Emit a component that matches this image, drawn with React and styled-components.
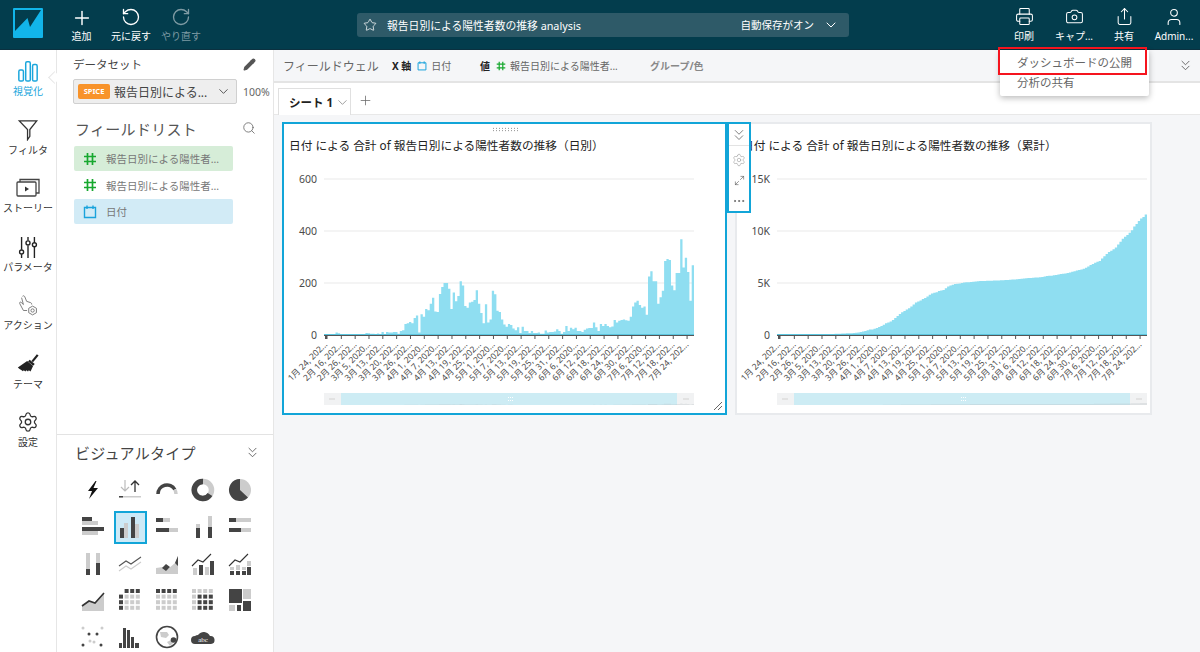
import styled, { createGlobalStyle } from "styled-components"
import { Plus, RotateCcw, RotateCw, Star, ChevronDown, ChevronsDown, Printer, Camera, Share, User, Pencil, Search, Maximize2, Ellipsis, Settings } from "lucide-react"

const FONT = `"Noto Sans", "Noto Sans CJK JP", sans-serif`

const daily = [
  3, 3, 3, 3, 3, 10, 7, 3, 3, 3, 3, 3, 3, 3, 3, 3, 3, 3, 8, 7, 5, 5, 4, 6, 4, 12, 3, 12, 10, 10, 12, 11, 5, 15, 18,
  42, 45, 50, 45, 65, 75, 10, 80, 70, 100, 95, 120, 143, 90, 88, 158, 185, 200, 200, 178, 100, 163, 130, 150, 207, 190,
  112, 105, 125, 128, 135, 172, 120, 85, 45, 118, 48, 60, 170, 157, 93, 88, 60, 40, 32, 42, 38, 25, 18, 30, 8, 32, 15, 15,
  8, 15, 8, 8, 10, 5, 5, 17, 10, 12, 12, 14, 22, 15, 5, 12, 35, 15, 28, 22, 28, 15, 15, 12, 20, 25, 27, 27, 48, 30, 15,
  42, 35, 42, 35, 30, 33, 58, 48, 55, 58, 60, 57, 55, 70, 110, 125, 132, 115, 105, 110, 78, 225, 245, 207, 207, 120, 145,
  170, 285, 292, 288, 190, 172, 238, 238, 368, 260, 297, 242, 132, 268,
]

const total = daily.reduce((a, b) => a + b, 0)
let running = 0
const cumulative = daily.map((v) => {
  running += v
  return (running / total) * 11600
})

const dateLabels = [
  "1月 24, 202...", "2月 16, 202...", "2月 26, 202...", "3月 5, 2020...", "3月 13, 202...", "3月 20, 202...", "3月 26, 202...",
  "4月 1, 2020...", "4月 7, 2020...", "4月 13, 202...", "4月 19, 202...", "4月 25, 202...", "5月 1, 2020...", "5月 7, 2020...",
  "5月 13, 202...", "5月 19, 202...", "5月 25, 202...", "5月 31, 202...", "6月 6, 2020...", "6月 12, 202...", "6月 18, 202...",
  "6月 24, 202...", "6月 30, 202...", "7月 6, 2020...", "7月 12, 202...", "7月 18, 202...", "7月 24, 202...",
]

const PLOT_LEFT = 40
const PLOT_WIDTH = 370
const BASE_Y = 170
const PLOT_HEIGHT = 156

const AxisText = styled.text`
  fill: #4a4a4a;
  font-family: ${FONT};
`

const CloudText = styled.text`
  fill: #fff;
  font-size: 7px;
  font-family: "Liberation Serif", serif;
`

function stepPath(values, max, left, base, width, height) {
  const step = width / values.length
  let d = `M${left} ${base}`
  values.forEach((v, i) => {
    const y = (base - (v / max) * height).toFixed(1)
    d += `L${(left + i * step).toFixed(1)} ${y}L${(left + (i + 1) * step).toFixed(1)} ${y}`
  })
  return d + `L${left + width} ${base}Z`
}

function BarChart({ values, max, ticks, width }) {
  return (
    <svg width={width} height="248" viewBox={`0 0 ${width} 248`}>
      {ticks.map((t, i) => {
        const y = BASE_Y - (PLOT_HEIGHT * i) / (ticks.length - 1)
        return (
          <g key={t}>
            {i > 0 && <line x1={PLOT_LEFT} x2={PLOT_LEFT + PLOT_WIDTH} y1={y} y2={y} stroke="#e9e9e9" />}
            <AxisText x="33" y={y + 3.5} textAnchor="end" fontSize="10.5">{t}</AxisText>
          </g>
        )
      })}
      <path d={stepPath(values, max, PLOT_LEFT, BASE_Y, PLOT_WIDTH, PLOT_HEIGHT)} fill="#8fdef1" />
      <line x1={PLOT_LEFT} x2={PLOT_LEFT + PLOT_WIDTH} y1={BASE_Y + 0.5} y2={BASE_Y + 0.5} stroke="#555" />
      <line x1={PLOT_LEFT} x2={PLOT_LEFT + PLOT_WIDTH} y1={BASE_Y - 0.5} y2={BASE_Y - 0.5} stroke="#5cc6df" />
      <rect x={PLOT_LEFT + 1} y={BASE_Y} width="2.5" height="4" fill="#555" />
      {dateLabels.map((label, i) => {
        const x = PLOT_LEFT + 2 + (i === 0 ? 0 : 1.5 + i * 13.83)
        return (
          <g key={label}>
            {i > 0 && <line x1={x} x2={x} y1={BASE_Y} y2={BASE_Y + 4} stroke="#555" />}
            <AxisText x="0" y="0" textAnchor="end" fontSize="8.6" transform={`translate(${x + 2} ${BASE_Y + 10}) rotate(-45)`}>{label}</AxisText>
          </g>
        )
      })}
      <rect x={PLOT_LEFT} y="228" width={PLOT_WIDTH} height="12" fill="#f1f2f3" />
      <rect x={PLOT_LEFT + 17} y="228" width={PLOT_WIDTH - 34} height="12" fill="#cdecf4" />
      <path d={stepPath(values, max * 4, PLOT_LEFT, 240, PLOT_WIDTH, 10)} fill="#b9c3c7" opacity="0.35" />
      <g fill="#fff">
        {[0, 1, 2].map((i) => (
          <g key={i}>
            <rect x={PLOT_LEFT + 184 + i * 2} y="232" width="1" height="1" />
            <rect x={PLOT_LEFT + 184 + i * 2} y="235" width="1" height="1" />
          </g>
        ))}
      </g>
      <rect x={PLOT_LEFT + 5} y="233" width="6" height="2" fill="#e2e2e2" />
      <rect x={PLOT_LEFT + PLOT_WIDTH - 11} y="233" width="6" height="2" fill="#e2e2e2" />
    </svg>
  )
}

const HashIcon = ({ size = 14 }) => (
  <svg width={size} height={size} viewBox="0 0 14 14" fill="none" stroke="#17a82f" strokeWidth="1.7">
    <path d="M4.5 1v12M9.5 1v12M1 4.5h12M1 9.5h12" />
  </svg>
)

const CalendarIcon = ({ size = 14 }) => (
  <svg width={size} height={size} viewBox="0 0 14 14" fill="none" stroke="#1aa3dc" strokeWidth="1.4">
    <path d="M1.5 2.5h11v10h-11zM4 .5v3.5M10 .5v3.5" />
  </svg>
)

const Logo = () => (
  <svg width="30" height="30" viewBox="0 0 30 30">
    <rect width="30" height="30" rx="1" fill="#12b5ea" />
    <path d="M2 2h26L17 19l-2.5-9L2 23z" fill="#033d4d" />
  </svg>
)

const BarsRailIcon = () => (
  <svg width="24" height="24" viewBox="0 0 24 24" fill="none" stroke="#1aa6dc" strokeWidth="1.6">
    <rect x="2" y="11" width="5" height="12" rx="1.5" />
    <rect x="9.5" y="2" width="5" height="21" rx="1.5" />
    <rect x="17" y="5" width="5" height="18" rx="1.5" />
  </svg>
)

const FunnelIcon = () => (
  <svg width="22" height="24" viewBox="0 0 22 24" fill="none" stroke="#333" strokeWidth="1.4">
    <path d="M1.5 2h19L13 11.5V19l-2.5 3.5V11.500z" />
  </svg>
)

const StoryIcon = () => (
  <svg width="24" height="20" viewBox="0 0 24 20" fill="none" stroke="#444" strokeWidth="1.3">
    <rect x="1" y="4" width="19" height="14" rx="1" />
    <path d="M4 4V1.5h19V15h-3" />
    <path d="M9 8.5l4 2.5-4 2.500z" fill="#333" stroke="none" />
  </svg>
)

const SlidersIcon = () => (
  <svg width="24" height="24" viewBox="0 0 24 24" fill="none" stroke="#222" strokeWidth="1.5">
    <path d="M5 1v14M5 20v4M12 1v4M12 10v14M19 1v6M19 12v12" />
    <circle cx="5" cy="17.5" r="2.2" />
    <circle cx="12" cy="7.5" r="2.2" />
    <circle cx="19" cy="9.5" r="2.2" />
  </svg>
)

const ActionIcon = () => (
  <svg width="24" height="24" viewBox="0 0 24 24" fill="none" stroke="#666" strokeWidth="0.9">
    <path d="M6 2.5c1-1 2-.5 2.5.5l2 5 4.5 1.5c1 .4 1 1.2 1 2M3 10.5c-.7-1.200.6-2.200 1.600-1.300L7 11.500 5 4M3 10.500l4 7.500h4" />
    <circle cx="17" cy="18" r="1.8" />
    <path d="M17 13.2l4.2 2.4v4.800L17 22.800l-4.200-2.400v-4.800z" />
  </svg>
)

const BrushIcon = () => (
  <svg width="26" height="26" viewBox="0 0 26 26" fill="#222">
    <path d="M17 9.5l6.5-8 2 1.5-6.500 8z" />
    <path d="M15 8l6 5-2 2-6-5z" />
    <path d="M12 9.5l7 6-3 6.500-2-1.500-1 1.500-2-1.500-1 1.500-2-1.500-1 1-2-1.500L3 19l-2-2z" />
  </svg>
)

const Dk = "#444"
const Lt = "#ccc"

function Cells({ rows }) {
  return rows.map((row, r) =>
    row.split("").map((c, i) => (
      <rect key={`${r}-${i}`} x={1 + i * 5.6} y={1 + r * 5.6} width="4" height="4" fill={c === "d" ? Dk : c === "l" ? Lt : "none"} />
    ))
  )
}

const visualTypes = [
  <path d="M14.5 3L7 13h4l-3 8 9-11h-4.5l3-7z" fill="#111" />,
  <g>
    <path d="M7 2v11M3 9l4 4 4-4" fill="none" stroke="#bbb" strokeWidth="1.2" />
    <path d="M17 14V3M13 7l4-4 4 4" fill="none" stroke="#333" strokeWidth="1.3" />
    <rect x="1" y="18" width="22" height="1.5" fill="#ccc" />
    <rect x="1" y="18" width="4" height="1.5" fill="#444" />
  </g>,
  <g fill="none" strokeWidth="3.5">
    <path d="M3 16A9 9 0 0 1 19.8 11.5" stroke={Dk} />
    <path d="M19.8 11.5A9 9 0 0 1 21 16" stroke={Lt} />
  </g>,
  <g fill="none" strokeWidth="5.5">
    <circle cx="12" cy="12" r="8.5" stroke={Lt} />
    <path d="M12 3.5a8.5 8.5 0 1 0 7 13" stroke={Dk} />
  </g>,
  <g>
    <circle cx="12" cy="12" r="11" fill={Lt} />
    <path d="M12 12V1A11 11 0 1 0 20 19.5z" fill={Dk} />
  </g>,
  <g>
    <rect x="1" y="2" width="10" height="4" fill={Dk} />
    <rect x="1" y="6" width="16" height="4" fill={Lt} />
    <rect x="1" y="12" width="22" height="4" fill={Dk} />
    <rect x="1" y="16" width="16" height="4" fill={Lt} />
  </g>,
  <g>
    <rect x="2" y="13" width="4" height="10" fill={Dk} />
    <rect x="6" y="8" width="4" height="15" fill={Lt} />
    <rect x="13" y="2" width="4" height="21" fill={Dk} />
    <rect x="17" y="9" width="4" height="14" fill={Lt} />
  </g>,
  <g>
    <rect x="1" y="3" width="7" height="4" fill={Dk} /><rect x="8" y="3" width="7" height="4" fill={Lt} />
    <rect x="1" y="13" width="13" height="4" fill={Dk} /><rect x="14" y="13" width="9" height="4" fill={Lt} />
  </g>,
  <g>
    <rect x="5" y="13" width="4" height="10" fill={Dk} /><rect x="5" y="9" width="4" height="4" fill={Lt} />
    <rect x="17" y="1" width="4" height="11" fill={Lt} /><rect x="17" y="12" width="4" height="11" fill={Dk} />
  </g>,
  <g>
    <rect x="1" y="3" width="7" height="4" fill={Dk} /><rect x="8" y="3" width="15" height="4" fill={Lt} />
    <rect x="1" y="13" width="12" height="4" fill={Dk} /><rect x="13" y="13" width="10" height="4" fill={Lt} />
  </g>,
  <g>
    <rect x="5" y="1" width="4" height="16" fill={Lt} /><rect x="5" y="17" width="4" height="6" fill={Dk} />
    <rect x="15" y="1" width="4" height="10" fill={Lt} /><rect x="15" y="11" width="4" height="12" fill={Dk} />
  </g>,
  <g fill="none" strokeWidth="1.1">
    <path d="M1 14l7-5 5 3 10-7" stroke="#555" />
    <path d="M1 19l7-5 5 3 10-7" stroke={Lt} />
  </g>,
  <g>
    <path d="M1 16l7-1 5 2 7-6 3-7v18H1z" fill={Lt} />
    <path d="M7 16l4-4 4 3-4 4zM20 11l3-7v10z" fill={Dk} />
  </g>,
  <g>
    <rect x="2" y="16" width="4" height="7" fill={Lt} /><rect x="8" y="13" width="4" height="10" fill={Dk} />
    <rect x="14" y="15" width="4" height="8" fill={Lt} /><rect x="19" y="9" width="4" height="14" fill={Dk} />
    <path d="M1 14l6-6 5 2 8-8" fill="none" stroke="#333" strokeWidth="1.1" />
  </g>,
  <g>
    <rect x="2" y="19" width="4" height="4" fill={Dk} /><rect x="2" y="15" width="4" height="3" fill={Lt} />
    <rect x="8" y="19" width="4" height="4" fill={Dk} /><rect x="8" y="13" width="4" height="5" fill={Lt} />
    <rect x="14" y="19" width="4" height="4" fill={Dk} /><rect x="14" y="15" width="4" height="3" fill={Lt} />
    <rect x="19" y="15" width="4" height="8" fill={Dk} /><rect x="19" y="9" width="4" height="5" fill={Lt} />
    <path d="M1 14l6-6 5 2 8-8" fill="none" stroke="#333" strokeWidth="1.1" />
  </g>,
  <g>
    <path d="M1 18l7-5 6 2 9-10v18H1z" fill={Lt} />
    <path d="M1 18l7-5 6 2 9-10" fill="none" stroke="#333" strokeWidth="1.6" />
  </g>,
  <Cells rows={[".ddd", "dlll", "dlll", "dlll"]} />,
  <Cells rows={["dddd", "llll", "llll", "llll"]} />,
  <Cells rows={["llll", "lddd", "lddd", "lddd"]} />,
  <g>
    <rect x="1" y="1" width="13" height="14" fill={Dk} />
    <rect x="15" y="1" width="8" height="10" fill={Lt} />
    <rect x="1" y="17" width="6" height="6" fill={Lt} />
    <rect x="9" y="17" width="4" height="6" fill={Dk} />
    <rect x="15" y="13" width="8" height="10" fill={Dk} />
  </g>,
  <g>
    {[[2, 3, Lt], [21, 3, Lt], [8, 9, Dk], [16, 9, Dk], [13, 17, Lt], [2, 20, Dk], [9, 16, Lt], [20, 20, Dk]].map(([cx, cy, fill]) => (
      <circle key={`${cx}-${cy}`} cx={cx} cy={cy} r="1.5" fill={fill} />
    ))}
  </g>,
  <g fill={Dk}>
    <rect x="1" y="18" width="3" height="5" /><rect x="5" y="3" width="3" height="20" />
    <rect x="9" y="5" width="3" height="18" /><rect x="13" y="12" width="3" height="11" />
    <rect x="17" y="18" width="4" height="5" />
  </g>,
  <g>
    <circle cx="12" cy="12" r="10.5" fill="#fff" stroke={Dk} strokeWidth="1.6" />
    <path d="M5 7h7l2 3-3 3-5-1zM12 17l4-2 2 3-3 3z" fill="#ccc" />
    <circle cx="18.5" cy="15" r="2.8" fill={Dk} />
  </g>,
  <g>
    <path d="M4 19a4 4 0 0 1 0-8 5 5 0 0 1 3-1 7 7 0 0 1 12 1 4 4 0 0 1 1 8z" fill={Dk} />
    <CloudText x="12" y="17" textAnchor="middle">abc</CloudText>
  </g>,
]

export default function App() {
  return (
    <>
      <GlobalStyle />
      <Page>
        <TopBar>
          <LogoBox><Logo /></LogoBox>
          <TopAction $w="49px"><Plus size={24} strokeWidth={1.6} /><span>追加</span></TopAction>
          <TopAction $w="50px"><RotateCcw size={20} strokeWidth={1.6} /><span>元に戻す</span></TopAction>
          <TopAction $w="50px" $dim><RotateCw size={20} strokeWidth={1.6} /><span>やり直す</span></TopAction>
          <TitleBox>
            <Star size={14} strokeWidth={1.3} />
            <TitleText>報告日別による陽性者数の推移 analysis</TitleText>
            <AutoSave>自動保存がオン</AutoSave>
            <ChevronDown size={16} strokeWidth={1.5} />
          </TitleBox>
          <TopRight>
            <TopAction $w="50px"><Printer size={19} strokeWidth={1.3} /><span>印刷</span></TopAction>
            <TopAction $w="50px"><Camera size={19} strokeWidth={1.3} /><span>キャプ...</span></TopAction>
            <TopAction $w="50px"><Share size={19} strokeWidth={1.3} /><span>共有</span></TopAction>
            <TopAction $w="50px"><User size={20} strokeWidth={1.3} /><span>Admin...</span></TopAction>
          </TopRight>
        </TopBar>
        <Body>
          <Rail>
            <RailItem $active><BarsRailIcon /><span>視覚化</span><RailNotch /></RailItem>
            <RailItem><FunnelIcon /><span>フィルタ</span></RailItem>
            <RailItem><StoryIcon /><span>ストーリー</span></RailItem>
            <RailItem><SlidersIcon /><span>パラメータ</span></RailItem>
            <RailItem><ActionIcon /><span>アクション</span></RailItem>
            <RailItem><BrushIcon /><span>テーマ</span></RailItem>
            <RailItem><Settings size={22} strokeWidth={1.4} color="#333" /><span>設定</span></RailItem>
          </Rail>
          <SidePanel>
            <FieldSection>
              <DatasetHead>
                <span>データセット</span>
                <Pencil size={13} fill="#555" stroke="#555" />
              </DatasetHead>
              <DatasetRow>
                <DatasetSelect>
                  <SpiceBadge>SPICE</SpiceBadge>
                  <DatasetName>報告日別による...</DatasetName>
                  <ChevronDown size={15} strokeWidth={1.4} color="#444" />
                </DatasetSelect>
                <Percent>100%</Percent>
              </DatasetRow>
              <FieldHead>
                <span>フィールドリスト</span>
                <Search size={14} strokeWidth={1.4} color="#666" />
              </FieldHead>
              <FieldRow $bg="#d6edd8"><HashIcon /><span>報告日別による陽性者...</span></FieldRow>
              <FieldRow><HashIcon /><span>報告日別による陽性者...</span></FieldRow>
              <FieldRow $bg="#d2ebf6"><CalendarIcon /><span>日付</span></FieldRow>
            </FieldSection>
            <VisualSection>
              <VisualHead>
                <span>ビジュアルタイプ</span>
                <ChevronsDown size={17} strokeWidth={1.2} color="#555" />
              </VisualHead>
              <VisualGrid>
                {visualTypes.map((icon, i) => (
                  <VisualCell key={i} $selected={i === 6}>
                    <svg width="24" height="24" viewBox="0 0 24 24">{icon}</svg>
                  </VisualCell>
                ))}
              </VisualGrid>
            </VisualSection>
          </SidePanel>
          <Main>
            <WellBar>
              <WellTitle>フィールドウェル</WellTitle>
              <WellGroup $w="88px"><b>X 軸</b><CalendarIcon size={10} /><span>日付</span></WellGroup>
              <WellGroup $w="170px"><b>値</b><HashIcon size={10} /><span>報告日別による陽性者...</span></WellGroup>
              <WellMuted>グループ/色</WellMuted>
              <WellChevron><ChevronsDown size={17} strokeWidth={1.2} color="#555" /></WellChevron>
            </WellBar>
            <TabRow>
              <SheetTab>シート 1<ChevronDown size={15} strokeWidth={1} color="#666" /></SheetTab>
              <Plus size={15} strokeWidth={1.2} color="#666" />
            </TabRow>
            <Sheet>
              <ChartCard $selected>
                <DragDots />
                <ChartTitle>日付 による 合計 of 報告日別による陽性者数の推移（日別）</ChartTitle>
                <BarChart values={daily} max={600} ticks={["0", "200", "400", "600"]} width={441} />
                <ResizeGrip viewBox="0 0 8 8" width="8" height="8">
                  <path d="M0 8L8 0M4 8L8 4" stroke="#666" strokeWidth="1" />
                </ResizeGrip>
                <ChartTools>
                  <ToolHead><ChevronsDown size={18} strokeWidth={1.1} color="#666" /></ToolHead>
                  <Settings size={14} strokeWidth={1} color="#999" />
                  <Maximize2 size={11} strokeWidth={1.3} color="#555" />
                  <Ellipsis size={14} strokeWidth={1.6} color="#666" />
                </ChartTools>
              </ChartCard>
              <ChartCard>
                <ChartTitle>日付 による 合計 of 報告日別による陽性者数の推移（累計）</ChartTitle>
                <BarChart values={cumulative} max={15000} ticks={["0", "5K", "10K", "15K"]} width={413} />
              </ChartCard>
            </Sheet>
          </Main>
        </Body>
        <ShareMenu>
          <MenuItem $h="26px">ダッシュボードの公開</MenuItem>
          <MenuItem $h="13px">分析の共有</MenuItem>
          <MenuHighlight />
        </ShareMenu>
      </Page>
    </>
  )
}

const GlobalStyle = createGlobalStyle`
  html, body {
    margin: 0;
    padding: 0;
    background: #fff;
    overflow: hidden;
  }
  body {
    font-family: ${FONT};
  }
`

const Page = styled.div`
  position: relative;
  width: 1200px;
  height: 652px;
  display: flex;
  flex-direction: column;
  overflow: hidden;
`

const TopBar = styled.header`
  height: 49px;
  flex: none;
  display: flex;
  align-items: center;
  background: #033d4d;
  color: #fff;
  border-bottom: 1px solid #0b3140;
`

const LogoBox = styled.div`
  display: flex;
  width: 57px;
  padding-left: 13px;
  box-sizing: border-box;
  align-self: flex-start;
  margin-top: 8px;
`

const TopAction = styled.div`
  width: ${(p) => p.$w};
  display: flex;
  flex-direction: column;
  align-items: center;
  height: 36px;
  justify-content: space-between;
  color: ${(p) => (p.$dim ? "#7f9ba4" : "#fff")};
  span {
    font-size: 10px;
    line-height: 14px;
    white-space: nowrap;
  }
  svg {
    margin-top: 0;
  }
`

const TitleBox = styled.div`
  width: 492px;
  height: 24px;
  margin-left: 151px;
  display: flex;
  align-items: center;
  padding: 0 10px 0 6px;
  box-sizing: border-box;
  background: #2e5a68;
  border-radius: 3px;
  color: #fff;
`

const TitleText = styled.span`
  margin-left: 10px;
  flex: 1;
  font-size: 10.8px;
`

const AutoSave = styled.span`
  margin-right: 9px;
  font-size: 10.5px;
`

const TopRight = styled.div`
  margin-left: auto;
  display: flex;
  padding-right: 1px;
`

const Body = styled.div`
  flex: 1;
  display: flex;
  min-height: 0;
`

const Rail = styled.nav`
  width: 57px;
  flex: none;
  box-sizing: border-box;
  border-right: 1px solid #e6e6e6;
  padding-top: 10px;
  display: flex;
  flex-direction: column;
`

const RailItem = styled.div`
  position: relative;
  height: 58.5px;
  display: flex;
  flex-direction: column;
  align-items: center;
  color: ${(p) => (p.$active ? "#1aa6dc" : "#333")};
  svg {
    height: 22px;
    flex: none;
  }
  span {
    margin-top: 2px;
    font-size: 10px;
    line-height: 14px;
    white-space: nowrap;
  }
`

const RailNotch = styled.i`
  position: absolute;
  right: -3px;
  top: 13px;
  width: 8px;
  height: 8px;
  background: #fff;
  border-left: 1px solid #e6e6e6;
  border-bottom: 1px solid #e6e6e6;
  transform: rotate(45deg);
`

const SidePanel = styled.aside`
  width: 217px;
  flex: none;
  box-sizing: border-box;
  border-right: 1px solid #e6e6e6;
  display: flex;
  flex-direction: column;
`

const FieldSection = styled.section`
  height: 385px;
  flex: none;
  box-sizing: border-box;
  border-bottom: 1px solid #e3e3e3;
  padding: 6px 0 0 16px;
`

const DatasetHead = styled.div`
  width: 183px;
  height: 16px;
  display: flex;
  justify-content: space-between;
  align-items: center;
  font-size: 11.5px;
  color: #444;
`

const DatasetRow = styled.div`
  margin-top: 7px;
  display: flex;
  align-items: center;
  gap: 6px;
`

const DatasetSelect = styled.div`
  width: 164px;
  height: 25px;
  box-sizing: border-box;
  display: flex;
  align-items: center;
  padding: 0 5px 0 4px;
  background: #eeeeee;
  border: 1px solid #d0d0d0;
  border-radius: 2px;
`

const SpiceBadge = styled.span`
  width: 32px;
  height: 15px;
  flex: none;
  background: #f8932a;
  border-radius: 2px;
  color: #fff;
  font-size: 7.5px;
  font-weight: 700;
  line-height: 15px;
  text-align: center;
`

const DatasetName = styled.span`
  flex: 1;
  margin-left: 4px;
  font-size: 12px;
  color: #444;
  white-space: nowrap;
`

const Percent = styled.span`
  font-size: 10.5px;
  color: #666;
`

const FieldHead = styled.div`
  width: 181px;
  margin: 14px 0 8px 2px;
  height: 20px;
  display: flex;
  justify-content: space-between;
  align-items: center;
  font-size: 15px;
  color: #555;
  letter-spacing: 0.3px;
`

const FieldRow = styled.div`
  width: 159px;
  height: 25px;
  margin: 0 0 1.5px 1px;
  box-sizing: border-box;
  display: flex;
  align-items: center;
  gap: 9px;
  padding-left: 9px;
  background: ${(p) => p.$bg || "transparent"};
  border-radius: 2px;
  font-size: 10.5px;
  color: #777;
  white-space: nowrap;
`

const VisualSection = styled.section`
  flex: 1;
  min-height: 0;
  padding: 7px 0 0 18px;
`

const VisualHead = styled.div`
  width: 186px;
  height: 20px;
  display: flex;
  justify-content: space-between;
  align-items: center;
  font-size: 15px;
  color: #444;
  letter-spacing: 0.3px;
`

const VisualGrid = styled.div`
  margin: 10px 0 0 0;
  display: grid;
  grid-template-columns: repeat(5, 36.7px);
  grid-auto-rows: 36.7px;
`

const VisualCell = styled.div`
  display: flex;
  align-items: center;
  justify-content: center;
  box-sizing: border-box;
  ${(p) => p.$selected && `
    width: 33px;
    height: 33px;
    margin: 2px 0 0 2px;
    background: #cdeaf7;
    border: 2px solid #12a5d8;
  `}
`

const Main = styled.main`
  flex: 1;
  min-width: 0;
  display: flex;
  flex-direction: column;
  background: #f5f6f8;
`

const WellBar = styled.div`
  height: 33px;
  flex: none;
  box-sizing: border-box;
  display: flex;
  align-items: center;
  padding: 0 6px 0 9px;
  border-bottom: 2px solid #e4e4e4;
  font-size: 10px;
  color: #666;
`

const WellTitle = styled.span`
  width: 109px;
  font-size: 12px;
  color: #666;
  white-space: nowrap;
`

const WellGroup = styled.div`
  width: ${(p) => p.$w};
  display: flex;
  align-items: center;
  gap: 4px;
  white-space: nowrap;
  b {
    color: #222;
    font-weight: 700;
    margin-right: 2px;
  }
`

const WellMuted = styled.span`
  font-weight: 700;
  color: #888;
`

const WellChevron = styled.div`
  margin-left: auto;
  display: flex;
`

const TabRow = styled.div`
  height: 32px;
  flex: none;
  box-sizing: border-box;
  padding: 5px 0 0 4px;
  display: flex;
  align-items: flex-end;
  gap: 7px;
  background: #fff;
  border-bottom: 1px solid #e8e8e8;
  > svg {
    margin-bottom: 6px;
  }
`

const SheetTab = styled.div`
  width: 73px;
  height: 27px;
  box-sizing: border-box;
  display: flex;
  align-items: center;
  gap: 2px;
  padding-left: 10px;
  border: 1px solid #e0e0e0;
  border-bottom: none;
  font-size: 11.5px;
  font-weight: 700;
  color: #222;
  white-space: nowrap;
  background: #fff;
  margin-bottom: -1px;
`

const Sheet = styled.div`
  flex: 1;
  display: flex;
  align-items: flex-start;
  gap: 8px;
  padding: 7px 0 0 8px;
`

const ChartCard = styled.div`
  position: relative;
  height: 293px;
  box-sizing: border-box;
  display: flex;
  flex-direction: column;
  background: #fff;
  border: 2px solid ${(p) => (p.$selected ? "#12a5d8" : "#e8eaed")};
  svg {
    display: block;
  }
`

const DragDots = styled.i`
  position: absolute;
  top: 3px;
  left: 208px;
  width: 26px;
  height: 5px;
  background-image: radial-gradient(circle, #777 0.7px, transparent 0.8px);
  background-size: 3px 2.5px;
`

const ChartTitle = styled.div`
  height: 41px;
  box-sizing: border-box;
  padding: 12px 0 0 5px;
  font-size: 11.7px;
  font-weight: 400;
  line-height: 18px;
  color: #222;
  white-space: nowrap;
`

const ResizeGrip = styled.svg`
  position: absolute;
  right: 3px;
  bottom: 3px;
`

const ChartTools = styled.div`
  position: absolute;
  top: -2px;
  left: 443px;
  z-index: 2;
  width: 24px;
  height: 91px;
  box-sizing: border-box;
  background: #fff;
  border: 2px solid #12a5d8;
  display: flex;
  flex-direction: column;
  align-items: center;
  gap: 8px;
`

const ToolHead = styled.div`
  width: 100%;
  height: 21px;
  flex: none;
  display: flex;
  align-items: center;
  justify-content: center;
  border-bottom: 1px solid #e3e3e3;
  margin-bottom: -1px;
`

const ShareMenu = styled.div`
  position: absolute;
  top: 50px;
  left: 1000px;
  z-index: 5;
  width: 149px;
  height: 46px;
  background: #fff;
  border-radius: 0 0 2px 2px;
  box-shadow: 0 2px 6px rgba(0, 0, 0, 0.28);
  font-size: 11.5px;
  color: #666;
`

const MenuItem = styled.div`
  height: ${(p) => p.$h};
  line-height: ${(p) => p.$h};
  padding-left: 17px;
  white-space: nowrap;
`

const MenuHighlight = styled.i`
  position: absolute;
  top: -3px;
  left: -2px;
  width: 149px;
  height: 28px;
  border: 2.5px solid #f5141e;
  box-sizing: border-box;
`
